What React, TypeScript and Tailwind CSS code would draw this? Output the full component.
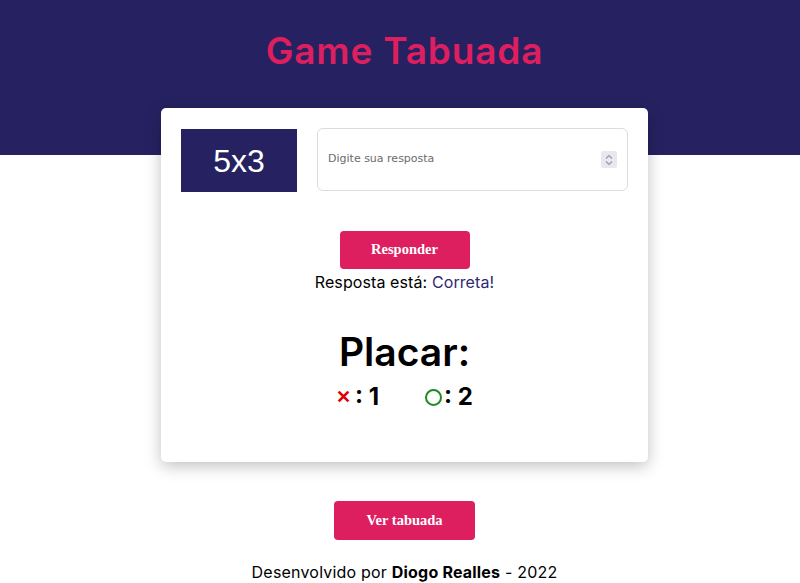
import React, { useState } from 'react';

const App: React.FC = () => {
  const [answer, setAnswer] = useState('');

  return (
    <div className="min-h-[583px] bg-white font-['Inter',sans-serif] text-black">
      <header className="h-[155px] bg-[#262262] pt-[29px] pl-[9px] text-center">
        <h1 className="text-[37px] font-semibold leading-[44px] tracking-[0.8px] text-[#dd1e5f]">
          Game Tabuada
        </h1>
      </header>

      <main className="-mt-[47px] pl-[9px] flex flex-col items-center">
        <div className="w-[487px] h-[354px] rounded-[5px] bg-white px-[20px] pt-[20px] shadow-[0_4px_16px_rgba(0,0,0,0.25)] flex flex-col items-center">
          <div className="flex w-full gap-[20px]">
            <div className="w-[116px] h-[63px] mt-px bg-[#262262] flex items-center justify-center text-white text-[32px] font-['Liberation_Sans',sans-serif]">
              5x3
            </div>
            <div className="flex-1 h-[63px] rounded-[6px] border border-[#dcdcdc] flex items-center pl-[10px] pr-[10px]">
              <input
                type="number"
                value={answer}
                onChange={(e) => setAnswer(e.target.value)}
                placeholder="Digite sua resposta"
                className="flex-1 text-[11px] outline-none placeholder:text-[#6b6b6b] font-['DejaVu_Sans',sans-serif] [&::-webkit-inner-spin-button]:appearance-none"
              />
              <span className="w-[16px] h-[17px] bg-[#e8e8ee] rounded-[2px] flex flex-col items-center justify-center">
                <svg width="8" height="12" viewBox="0 0 8 12" fill="none" stroke="#9a9aa5" strokeWidth="1.2">
                  <path d="M1 4.5 L4 1.5 L7 4.5" />
                  <path d="M1 7.5 L4 10.5 L7 7.5" />
                </svg>
              </span>
            </div>
          </div>

          <button className="mt-[39px] w-[130px] h-[38px] rounded-[4px] bg-[#dd1e5f] text-white text-[14.5px] font-bold font-['Liberation_Serif',serif]">
            Responder
          </button>
          <p className="mt-[3px] text-[16px] leading-[20px] tracking-[0.1px]">
            Resposta está: <span className="text-[#2f2a70]">Correta!</span>
          </p>

          <h2 className="mt-[38px] text-[39px] font-semibold leading-[44px]">Placar:</h2>
          <div className="mt-[8px] flex items-center gap-[46px] text-[24px] font-bold leading-[30px]">
            <span className="flex items-center">
              <span className="text-[#e00000] text-[18px] font-black mr-[4px]">✕</span>:&nbsp;1
            </span>
            <span className="flex items-center">
              <span className="inline-block w-[17px] h-[17px] rounded-full border-[2px] border-[#1f8a1f] mr-[2px]" />:&nbsp;2
            </span>
          </div>
        </div>

        <button className="mt-[39px] w-[141px] h-[39px] rounded-[4px] bg-[#dd1e5f] text-white text-[14.5px] font-bold font-['Liberation_Serif',serif]">
          Ver tabuada
        </button>
        <p className="mt-[22px] text-[16px] leading-[20px] tracking-[0.2px]">
          Desenvolvido por <span className="font-bold">Diogo Realles</span> - 2022
        </p>
      </main>
    </div>
  );
};

export default App;
